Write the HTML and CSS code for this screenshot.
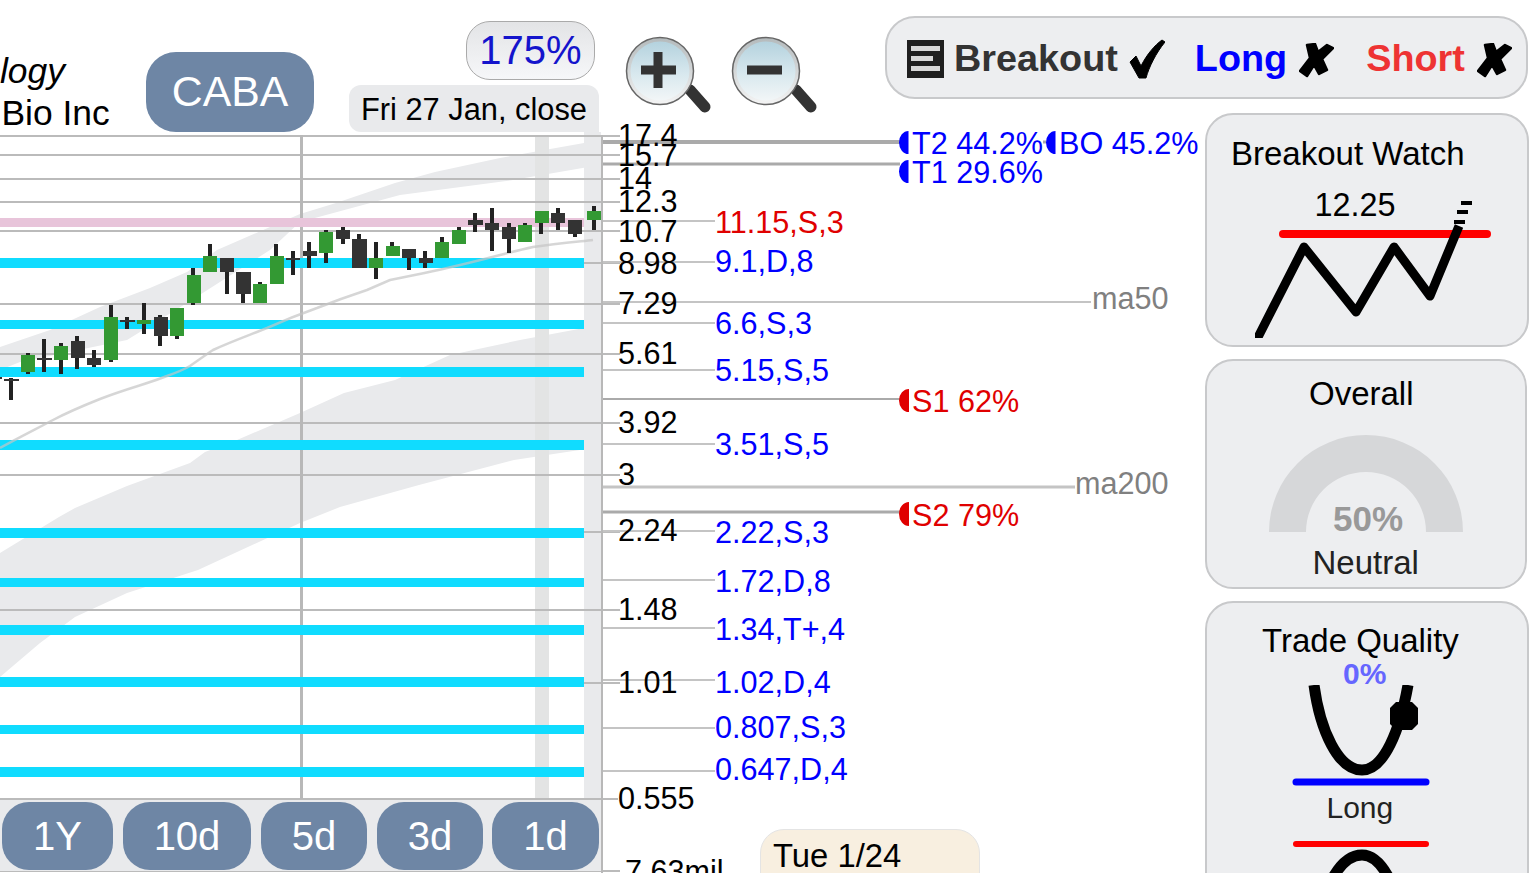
FILE: index.html
```html
<!DOCTYPE html>
<html lang="en">
<head>
<meta charset="utf-8">
<title>CABA</title>
<link rel="stylesheet" href="styles.css">
</head>
<body>
<div class="app">
  <header class="top">
    <div class="title"><em class="sector">logy</em><div class="company">Bio Inc</div></div>
    <div class="ticker">CABA</div>
    <div class="status">
      <div class="zoom-pct">175%</div>
      <div class="date">Fri 27 Jan, close</div>
    </div>
    <svg class="zoomers" viewBox="625 36 195 80" aria-hidden="true">
      <defs>
        <linearGradient id="lens" x1="0" y1="0" x2="0" y2="1">
          <stop offset="0" stop-color="#b4d2de"/>
          <stop offset=".55" stop-color="#d8e8ee"/>
          <stop offset="1" stop-color="#f2f6f7"/>
        </linearGradient>
        <linearGradient id="rim" x1="0" y1="0" x2="0" y2="1">
          <stop offset="0" stop-color="#b4babc"/>
          <stop offset="1" stop-color="#f4f4f4"/>
        </linearGradient>
      </defs>
      <path class="handle" d="M690 90L705 107"/>
      <circle class="lens-rim" cx="660" cy="71" r="33.5"/>
      <circle class="lens-glass" cx="660" cy="71" r="29.5"/>
      <path class="lens-mark" d="M641 70H676M658 52V88"/>
      <path class="handle" d="M796 90L811 107"/>
      <circle class="lens-rim" cx="766" cy="71" r="33.5"/>
      <circle class="lens-glass" cx="766" cy="71" r="29.5"/>
      <path class="lens-mark" d="M747 70H782"/>
    </svg>
    <div class="signals">
      <svg class="menu-icon" viewBox="0 0 37 38" aria-hidden="true">
        <rect width="37" height="38" fill="#1f1f1f"/>
        <path d="M4 8.500H33M4 18.500H26M4 28.500H33" stroke="#d8d8d8" stroke-width="5"/>
      </svg>
      <span class="sig sig-breakout">Breakout</span>
      <svg class="tick" viewBox="0 0 36 40" aria-hidden="true"><path d="M1 23L7 17L12 27C18 15 26 6 33 1L36 3C27 14 20 28 17 39L10 39Z"/></svg>
      <span class="sig sig-long">Long</span>
      <svg class="cross" viewBox="0 0 35 35" aria-hidden="true"><path d="M8 2L16 1L19 9L28 2L34 5L23 16L28 27L20 31L15 22L8 33L1 28L11 15Z"/></svg>
      <span class="sig sig-short">Short</span>
      <svg class="cross" viewBox="0 0 35 35" aria-hidden="true"><path d="M8 2L16 1L19 9L28 2L34 5L23 16L28 27L20 31L15 22L8 33L1 28L11 15Z"/></svg>
    </div>
  </header>

  <main class="main">
    <section class="stage">
      <svg class="chart" viewBox="0 113 1205 760">
        <path class="ma-band" d="M0 347L50 330L100 307L150 288L187 272L217 250L300 214L336 203L395 183L435 172L500 158L584 143L600 140V165L513 180L400 195L300 222L270 250L187 303L127 340L20 362L0 370Z"/>
        <path class="ma-band" d="M0 553L59 517L75 508L127 486L190 463L205 452L237 440L300 413L344 393L395 380L450 355L520 340L600 325V446L593 448L514 460L419 485L340 507L300 523L198 570L127 593L75 617L40 643L0 677Z"/>
        <rect class="day-mark" x="535" y="135" width="14" height="664"/>
        <rect class="day-strip" x="584" y="132" width="17" height="667"/>
        <path class="grid" d="M0 136H620M0 155H620M0 179H620M0 202H620M0 231H620M0 263H620M0 304H620M0 354H620M0 423H620M0 475H620M0 532H620M0 610H620M0 683H620M0 799H618M0 871H620"/>
        <path class="grid-v" d="M301.500 135V799"/>
        <rect class="pink-level" x="0" y="218" width="584" height="9"/>
        <path class="cyan-level" d="M0 258H584V268H0ZM0 320H584V329H0ZM0 367H584V377H0ZM0 440H584V450H0ZM0 528H584V538H0ZM0 578H584V587H0ZM0 625H584V635H0ZM0 677H584V687H0ZM0 725H584V734H0ZM0 767H584V777H0Z"/>
        <path class="ma-line" d="M0 448C20 437 40 427 53 420C70 411 85 405 100 399C125 389 150 383 167 376C178 372 185 369 190 366C200 359 207 354 213 350C235 340 250 335 267 328C285 320 300 314 317 308C335 301 352 295 367 290L390 280C415 275 440 270 460 265C490 258 510 252 533 247C555 244 575 242 593 240"/>
        <path class="wicks" d="M11 378V400M28 353V374M44 339V372M61 343V374M77 336V369M94 350V367M111 305V362M127 317V329M144 303V334M160 315V346M177 317V339M193 268V305M210 244V272M227 258V294M243 272V303M260 282V303M276 244V284M293 251V275M309 242V268M326 230V263M343 227V244M359 234V268M376 242V279M392 242V256M409 249V270M425 251V268M442 237V258M459 227V244M475 213V232M492 208V251M509 223V253M525 223V242M541 211V234M558 208V230M575 220V237M594 206V230"/>
        <path class="body-up" d="M21 355H35V372H21ZM54 346H68V360H54ZM104 317H118V360H104ZM137 320H151V324H137ZM170 308H184V336H170ZM187 275H201V303H187ZM203 256H217V272H203ZM253 284H267V303H253ZM270 256H284V284H270ZM319 232H333V253H319ZM369 258H383V268H369ZM386 246H400V256H386ZM435 242H449V258H435ZM452 230H466V244H452ZM518 225H532V242H518ZM535 211H549V223H535ZM587 211H601V220H587Z"/>
        <path class="body-down" d="M0 377H2V379H0ZM4 379H19V381H4ZM37 358H52V360H37ZM71 341H85V358H71ZM87 358H101V365H87ZM120 320H135V322H120ZM154 317H168V336H154ZM220 258H234V272H220ZM236 272H251V294H236ZM286 258H300V260H286ZM303 251H317V256H303ZM336 230H350V239H336ZM352 239H367V268H352ZM402 249H416V258H402ZM419 258H433V263H419ZM468 220H483V225H468ZM485 223H499V230H485ZM502 227H516V239H502ZM551 213H565V223H551ZM568 220H582V234H568Z"/>
        <path class="axis" d="M602 135V873"/>
        <path class="leader" d="M603 221H715M603 262H715M603 323H715M603 370H715M603 444H715M603 531H715M603 580H715M603 628H715M603 680H715M603 728H715M603 771H715"/>
        <path class="ma-lead" d="M603 302H1091"/>
        <path class="ma-lead ma-lead-wide" d="M603 487H1075"/>
        <path class="target t-wide" d="M603 142H900"/>
        <path class="target" d="M603 399H900"/>
        <path class="target t-mid" d="M603 164H900M603 512H900M1043 142H1046"/>
        <path class="bull" d="M908.500 131A9.500 11.500 0 0 0 908.500 154ZM908.500 160A9.500 11.500 0 0 0 908.500 183ZM1055.500 131A9.500 11.500 0 0 0 1055.500 154Z"/>
        <path class="bear" d="M909 389A10 11.500 0 0 0 909 412ZM909 502A10 12 0 0 0 909 526Z"/>
        <g class="t-price">
          <text x="618" y="146">17.4</text>
          <text x="618" y="166">15.7</text>
          <text x="618" y="189">14</text>
          <text x="618" y="212">12.3</text>
          <text x="618" y="242">10.7</text>
          <text x="618" y="274">8.98</text>
          <text x="618" y="314">7.29</text>
          <text x="618" y="364">5.61</text>
          <text x="618" y="433">3.92</text>
          <text x="618" y="485">3</text>
          <text x="618" y="541">2.24</text>
          <text x="618" y="620">1.48</text>
          <text x="618" y="693">1.01</text>
          <text x="618" y="809">0.555</text>
          <text x="625" y="882">7.63mil</text>
        </g>
        <g class="t-level">
          <text class="t-red" x="715" y="233">11.15,S,3</text>
          <text x="715" y="272">9.1,D,8</text>
          <text x="715" y="334">6.6,S,3</text>
          <text x="715" y="381">5.15,S,5</text>
          <text x="715" y="455">3.51,S,5</text>
          <text x="715" y="543">2.22,S,3</text>
          <text x="715" y="592">1.72,D,8</text>
          <text x="715" y="640">1.34,T+,4</text>
          <text x="715" y="693">1.02,D,4</text>
          <text x="715" y="738">0.807,S,3</text>
          <text x="715" y="780">0.647,D,4</text>
          <text x="912" y="154">T2 44.2%</text>
          <text x="1059" y="154">BO 45.2%</text>
          <text x="912" y="183">T1 29.6%</text>
          <text class="t-red" x="912" y="412">S1 62%</text>
          <text class="t-red" x="912" y="526">S2 79%</text>
        </g>
        <g class="t-ma">
          <text x="1092" y="309">ma50</text>
          <text x="1075" y="494">ma200</text>
        </g>
      </svg>
      <nav class="ranges">
        <button class="range r-1y">1Y</button>
        <button class="range r-10d">10d</button>
        <button class="range r-5d">5d</button>
        <button class="range r-3d">3d</button>
        <button class="range r-1d">1d</button>
      </nav>
      <div class="hover-date">Tue 1/24</div>
    </section>

    <aside class="side">
      <article class="card card-watch">
        <h2 class="card-title title-watch">Breakout Watch</h2>
        <div class="watch-value">12.25</div>
        <svg class="watch-art" viewBox="1255 195 240 143" aria-hidden="true">
          <path class="red-line" d="M1283 234H1487"/>
          <path class="zig" d="M1254 345L1304 247L1356 312L1394 247L1430 296L1459 226"/>
          <path class="dash" d="M1454 222H1465M1457 212H1468M1461 203H1472"/>
        </svg>
      </article>
      <article class="card card-overall">
        <h2 class="card-title title-overall">Overall</h2>
        <svg class="gauge" viewBox="1269 435 194 97">
          <path class="gauge-arc" d="M1269 532A97 97 0 0 1 1463 532H1426A60 60 0 0 0 1306 532Z"/>
          <text class="gauge-text" x="1333" y="531">50%</text>
        </svg>
        <div class="overall-state">Neutral</div>
      </article>
      <article class="card card-quality">
        <h2 class="card-title title-quality">Trade Quality</h2>
        <div class="quality-pct">0%</div>
        <svg class="quality-art" viewBox="1290 685 145 101" aria-hidden="true">
          <path class="curve" d="M1314 685C1320 730 1338 770 1362 770C1384 770 1400 730 1408 685"/>
          <path class="dot" d="M1396 702H1412L1418 708V724L1412 730H1396L1390 724V708Z"/>
          <path class="blue-line" d="M1296 782H1426"/>
        </svg>
        <div class="quality-side">Long</div>
        <svg class="quality-art short-art" viewBox="1290 840 145 60" aria-hidden="true">
          <path class="red-thin" d="M1296 844H1426"/>
          <path class="curve" d="M1314 940C1320 895 1338 855 1362 855C1384 855 1400 895 1408 940"/>
        </svg>
      </article>
    </aside>
  </main>
</div>
</body>
</html>
```

FILE: styles.css
```css
* { box-sizing: border-box; }
html, body { margin: 0; height: 873px; overflow: hidden; background: #fff; }
body { font-family: "Liberation Sans", Arial, sans-serif; color: #000; }
.app { width: 1540px; height: 873px; overflow: hidden; }

.top { display: flex; align-items: flex-start; height: 113px; position: relative; z-index: 2; }
.title { width: 146px; padding-top: 50px; font-size: 35.400px; line-height: 42px; flex: none; }
.sector { display: block; font-style: italic; }
.company { padding-left: 1.500px; white-space: nowrap; }
.ticker { flex: none; width: 168px; height: 80px; margin-top: 52px; border-radius: 30px; background: #6e86a5; color: #fff; font-size: 42.800px; line-height: 79px; text-align: center; }
.status { flex: none; width: 250px; margin-left: 35px; display: flex; flex-direction: column; align-items: flex-end; }
.zoom-pct { width: 129px; height: 59px; margin: 21px 4px 0 0; border: 1px solid #aaa; border-radius: 24px; background: linear-gradient(#e3e4e6, #f6f7f9); color: #1414cc; font-size: 40px; line-height: 57px; text-align: center; }
.date { width: 250px; height: 47px; margin-top: 5px; padding-left: 12px; border-radius: 12px 12px 0 12px; background: #e9eaec; font-size: 30.800px; line-height: 49px; white-space: nowrap; }
.zoomers { flex: none; width: 195px; height: 80px; margin: 36px 0 0 26px; }
.handle { fill: none; stroke: #333; stroke-width: 11; stroke-linecap: round; }
.lens-rim { fill: url(#rim); stroke: #666; stroke-width: 1.500; }
.lens-glass { fill: url(#lens); }
.lens-mark { fill: none; stroke: #333; stroke-width: 9; }

.signals { flex: none; width: 643px; height: 83px; margin: 16px 0 0 65px; padding: 2px 0 0 20px; display: flex; align-items: center; border: 2px solid #c8c9cb; border-radius: 30px; background: #edeef0; font-size: 37.800px; font-weight: 700; }
.menu-icon { width: 37px; height: 38px; flex: none; }
.sig { white-space: nowrap; }
.sig-breakout { margin-left: 10px; color: #333; }
.sig-long { margin-left: 30px; color: #00f; }
.sig-short { margin-left: 32px; color: #ee3333; }
.tick { width: 36px; height: 40px; margin-left: 11px; flex: none; stroke: #000; stroke-width: 1; stroke-linejoin: round; }
.cross { width: 35px; height: 35px; margin: 4px 0 0 12px; flex: none; stroke: #000; stroke-width: 2.500; stroke-linejoin: round; }

.main { display: flex; height: 760px; }
.stage { position: relative; flex: none; width: 1205px; height: 760px; }
.chart { display: block; width: 1205px; height: 760px; }
.ma-band { fill: #e9eaec; }
.day-mark { fill: #e3e4e4; }
.day-strip { fill: #e9eaec; }
.grid { fill: none; stroke: #bbb; stroke-width: 2; }
.grid-v { fill: none; stroke: #b8b8b8; stroke-width: 3; }
.pink-level { fill: #e8c4da; }
.cyan-level { fill: #10dcff; }
.ma-line { fill: none; stroke: #c4c4c4; stroke-opacity: .7; stroke-width: 2.500; }
.wicks { fill: none; stroke: #222; stroke-width: 4; }
.body-up { fill: #339933; }
.body-down { fill: #333; }
.axis { fill: none; stroke: #b8b8b8; stroke-width: 2; }
.leader { fill: none; stroke: #c4c4c4; stroke-width: 2; }
.ma-lead { fill: none; stroke: #c4c4c4; stroke-width: 2; }
.ma-lead-wide { stroke-width: 3; }
.target { fill: none; stroke: #aaa; stroke-width: 2; }
.t-wide { stroke-width: 4; }
.t-mid { stroke-width: 3; }
.bull { fill: #00f; }
.bear { fill: #e00000; }
.t-price, .t-level, .t-ma { font-size: 30.600px; }
.t-price { fill: #000; }
.t-level { fill: #00f; }
.t-level .t-red { fill: #e00000; }
.t-ma { fill: #808080; }

.ranges { position: absolute; left: 0; top: 687px; width: 601px; height: 71px; padding: 2px 0 0 2px; display: flex; gap: 10px; background: #e9eaec; }
.range { height: 68px; padding: 0; border: 0; border-radius: 27px; background: #6e86a5; color: #fff; font: 40px "Liberation Sans", Arial, sans-serif; }
.r-1y { width: 111px; }
.r-10d { width: 128px; }
.r-5d, .r-3d { width: 106px; }
.r-1d { width: 107px; margin-left: -1px; }
.hover-date { position: absolute; left: 760px; top: 716px; width: 220px; height: 70px; padding: 6px 0 0 12px; border: 1px solid #e4e4e4; border-radius: 24px 24px 0 0; background: #f8efe0; font-size: 32.800px; line-height: 40px; }

.side { flex: none; width: 335px; display: flex; flex-direction: column; gap: 12px; }
.card { flex: none; border: 2px solid #c8c9cb; border-radius: 28px; background: #edeef0; }
.card-watch { width: 324px; height: 234px; padding-top: 19px; }
.card-overall { width: 322px; height: 230px; padding-top: 13px; }
.card-quality { width: 324px; height: 320px; padding-top: 18px; }
.card-title { margin: 0; font-size: 33px; font-weight: 400; line-height: 40px; white-space: nowrap; }
.title-watch { padding-left: 24px; }
.title-overall { padding-left: 102px; }
.title-quality { padding-left: 55px; }
.watch-value { margin-top: 11px; padding-left: 107.500px; font-size: 32.400px; line-height: 40px; }
.watch-art { display: block; width: 240px; height: 143px; margin: -30px 0 0 48px; }
.red-line { fill: none; stroke: #ff0000; stroke-width: 8; stroke-linecap: round; }
.zig { fill: none; stroke: #000; stroke-width: 9; stroke-linejoin: round; }
.dash { fill: none; stroke: #000; stroke-width: 4; }
.gauge { display: block; width: 194px; height: 97px; margin: 21px 0 0 62px; overflow: visible; }
.gauge-arc { fill: #d6d7d9; }
.gauge-text { fill: #999; font-size: 35px; font-weight: 700; }
.overall-state { margin-top: 11px; padding-left: 105.500px; font-size: 33px; line-height: 40px; color: #222; }
.quality-pct { margin-top: -2px; padding-left: 136px; color: #6666ff; font-size: 30px; font-weight: 700; line-height: 30px; }
.quality-art { display: block; width: 145px; height: 101px; margin-left: 83px; margin-top: -4px; }
.short-art { height: 60px; margin-top: 14px; }
.curve { fill: none; stroke: #000; stroke-width: 11; }
.dot { fill: #000; }
.blue-line { fill: none; stroke: #0000ff; stroke-width: 7; stroke-linecap: round; }
.red-thin { fill: none; stroke: #ff0000; stroke-width: 6; stroke-linecap: round; }
.quality-side { margin-top: 4px; padding-left: 119.500px; font-size: 30px; line-height: 36px; color: #222; }
```
